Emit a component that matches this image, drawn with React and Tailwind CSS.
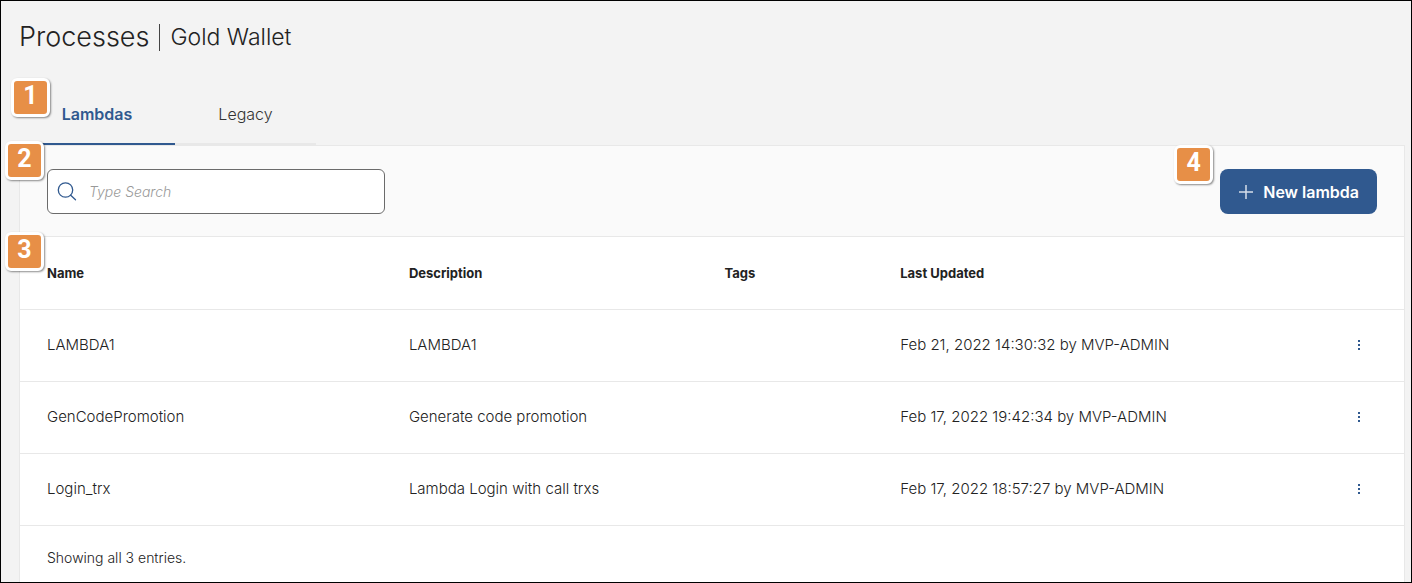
import { useState } from 'react';

const TABS = ['Lambdas', 'Legacy'];

const LAMBDAS = [
  { name: 'LAMBDA1', description: 'LAMBDA1', tags: '', updated: 'Feb 21, 2022 14:30:32 by MVP-ADMIN' },
  { name: 'GenCodePromotion', description: 'Generate code promotion', tags: '', updated: 'Feb 17, 2022 19:42:34 by MVP-ADMIN' },
  { name: 'Login_trx', description: 'Lambda Login with call trxs', tags: '', updated: 'Feb 17, 2022 18:57:27 by MVP-ADMIN' },
];

// Numbered callout that sits over the part it explains
function Marker({ number, className }) {
  return (
    <span
      className={`absolute z-10 flex h-[39px] w-[39px] items-center justify-center rounded-md border-3 border-white bg-[#e78f47] pb-1 font-[Roboto,'Liberation_Sans',sans-serif] text-[25px] leading-none font-bold text-white shadow-[1px_1px_2px_rgba(0,0,0,0.45)] ${className}`}
    >
      {number}
    </span>
  );
}

function SearchIcon() {
  return (
    <svg className="h-5 w-5 shrink-0" viewBox="0 0 20 20" fill="none" stroke="#30598f" strokeWidth="1.3" strokeLinecap="round" aria-hidden="true">
      <circle cx="8.5" cy="8" r="7.2" />
      <path d="M13.7 13.2 18.5 17.8" />
    </svg>
  );
}

function PlusIcon() {
  return (
    <svg className="h-[14px] w-[14px]" viewBox="0 0 14 14" fill="none" stroke="#d5deea" strokeWidth="1.5" aria-hidden="true">
      <path d="M7 0v14M0 7h14" />
    </svg>
  );
}

function MoreIcon() {
  return (
    <svg className="h-3 w-2" viewBox="0 0 8 12" fill="#30598f" aria-hidden="true">
      <rect x="3" y="1" width="2" height="2" />
      <rect x="3" y="5" width="2" height="2" />
      <rect x="3" y="9" width="2" height="2" />
    </svg>
  );
}

function Tabs({ active, onChange }) {
  return (
    <div className="relative flex" role="tablist">
      <Marker number={1} className="-top-[7px] -left-[8px]" />
      {TABS.map((tab) => (
        <button
          key={tab}
          type="button"
          role="tab"
          aria-selected={tab === active}
          onClick={() => onChange(tab)}
          className={
            tab === active
              ? 'h-[60px] w-[156px] border-b-2 border-[#30598f] text-base font-semibold text-[#30598f]'
              : 'h-[60px] w-[141px] border-b-2 border-[#e8e8e8] text-base font-light text-[#333333]'
          }
        >
          {tab}
        </button>
      ))}
    </div>
  );
}

function Toolbar({ query, onQuery }) {
  return (
    <div className="relative flex items-center justify-between border-b border-[#e8e8e8] bg-[#fafafa] px-[27px] pt-[23px] pb-[22px]">
      <Marker number={2} className="-top-[5px] -left-[15px]" />
      <label className="flex h-[45px] w-[338px] items-center gap-3 rounded-md border border-[#6b6b6b] bg-white px-[9px]">
        <SearchIcon />
        <input
          type="text"
          aria-label="Search"
          placeholder="Type Search"
          value={query}
          onChange={(e) => onQuery(e.target.value)}
          className="min-w-0 flex-1 bg-transparent text-sm font-light text-[#2b2b2b] outline-none placeholder:text-[#999999] placeholder:italic"
        />
      </label>
      <div className="relative">
        <Marker number={4} className="-top-[24px] -left-[46px]" />
        <button type="button" className="flex h-[45px] items-center gap-[10px] rounded-lg bg-[#30598f] pr-[18px] pl-[19px] text-base font-semibold text-white">
          <PlusIcon /> New lambda
        </button>
      </div>
    </div>
  );
}

function LambdaTable({ rows }) {
  return (
    <table className="w-full table-fixed text-left text-[15px]">
      <thead>
        <tr className="h-[72px] border-b border-[#e8e8e8] text-[13px] text-[#222222] *:pt-[2px]">
          <th className="w-[28.1%] pl-[27px] font-bold">Name</th>
          <th className="w-[22.8%] font-bold">Description</th>
          <th className="w-[12.7%] font-bold">Tags</th>
          <th className="font-bold">Last Updated</th>
          <th className="w-[65px]" aria-label="Actions" />
        </tr>
      </thead>
      <tbody className="font-light text-[#222222]">
        {rows.map((row) => (
          <tr key={row.name} className="h-[72px] border-b border-[#e8e8e8]">
            <td className="pl-[27px]">{row.name}</td>
            <td>{row.description}</td>
            <td>{row.tags}</td>
            <td>{row.updated}</td>
            <td>
              <button type="button" aria-label={`Actions for ${row.name}`} className="ml-2 flex h-6 w-6 items-center justify-center">
                <MoreIcon />
              </button>
            </td>
          </tr>
        ))}
      </tbody>
    </table>
  );
}

export default function App() {
  const [tab, setTab] = useState('Lambdas');
  const [query, setQuery] = useState('');
  const rows = LAMBDAS.filter((row) => row.name.toLowerCase().includes(query.toLowerCase()));

  return (
    <main className="flex min-h-screen flex-col border border-black bg-[#f3f3f3] pr-[6px] pl-[18px] font-[Inter,'Noto_Sans',sans-serif]">
      <h1 className="flex items-center gap-[10px] pt-[18px] pb-[30px] text-[27px] leading-9 font-light text-[#222222]">
        Processes
        <span className="h-[27px] w-px bg-[#444444]" />
        <span className="text-[23px]">Gold Wallet</span>
      </h1>
      <Tabs active={tab} onChange={setTab} />
      <section className="flex flex-1 flex-col border-x border-t border-[#e8e8e8] bg-white">
        <Toolbar query={query} onQuery={setQuery} />
        <div className="relative">
          <Marker number={3} className="-top-[5px] -left-[15px]" />
          <LambdaTable rows={rows} />
        </div>
        <p className="px-[27px] pt-[22px] pb-3 text-sm leading-5 font-light text-[#222222]">Showing all {rows.length} entries.</p>
      </section>
    </main>
  );
}
